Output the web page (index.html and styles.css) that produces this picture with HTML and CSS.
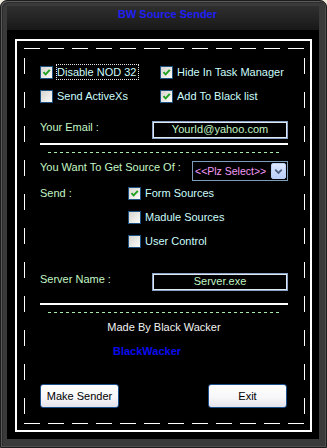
FILE: index.html
```html
<!DOCTYPE html>
<html lang="en">
<head>
	<meta charset="UTF-8">
	<meta name="viewport" content="width=device-width, initial-scale=1.0">
	<title>BW Source Sender</title>
	<link rel="stylesheet" href="styles.css">
</head>
<body>

	<div class="window">
		<div class="titlebar"><span class="titlebar__text">BW Source Sender</span></div>
		<div class="client">
			<div class="frame">
				<div class="panel">

					<div class="row row--checks">
						<label class="check check--wide">
							<span class="check__box is-checked"><svg viewBox="0 0 11 11"><path d="M2.5 5.2 L4.6 7.4 L8.8 2.8"/></svg></span>
							<span class="check__text check__text--focus">Disable NOD 32</span>
						</label>
						<label class="check">
							<span class="check__box is-checked"><svg viewBox="0 0 11 11"><path d="M2.5 5.2 L4.6 7.4 L8.8 2.8"/></svg></span>
							<span class="check__text">Hide In Task Manager</span>
						</label>
					</div>

					<div class="row row--checks row--second">
						<label class="check check--wide">
							<span class="check__box"></span>
							<span class="check__text">Send ActiveXs</span>
						</label>
						<label class="check">
							<span class="check__box is-checked"><svg viewBox="0 0 11 11"><path d="M2.5 5.2 L4.6 7.4 L8.8 2.8"/></svg></span>
							<span class="check__text">Add To Black list</span>
						</label>
					</div>

					<div class="row row--field row--email">
						<span class="label">Your Email :</span>
						<div class="textbox">YourId@yahoo.com</div>
					</div>

					<div class="rule"></div>
					<div class="dashes"></div>

					<div class="row row--field row--source">
						<span class="label">You Want To Get Source Of :</span>
						<div class="combo">
							<span class="combo__text">&lt;&lt;Plz Select&gt;&gt;</span>
							<span class="combo__btn"><svg viewBox="0 0 14 15"><path d="M3.5 6 L7 9.5 L10.5 6"/></svg></span>
						</div>
					</div>

					<div class="send">
						<span class="label label--send">Send :</span>
						<div class="send__list">
							<label class="check check--row">
								<span class="check__box is-checked"><svg viewBox="0 0 11 11"><path d="M2.5 5.2 L4.6 7.4 L8.8 2.8"/></svg></span>
								<span class="check__text">Form Sources</span>
							</label>
							<label class="check check--row">
								<span class="check__box"></span>
								<span class="check__text">Madule Sources</span>
							</label>
							<label class="check check--row">
								<span class="check__box"></span>
								<span class="check__text">User Control</span>
							</label>
						</div>
					</div>

					<div class="row row--field row--server">
						<span class="label">Server Name :</span>
						<div class="textbox">Server.exe</div>
					</div>

					<div class="rule rule--bottom"></div>
					<div class="dashes"></div>

					<div class="credit">Made By Black Wacker</div>
					<div class="brand">BlackWacker</div>

					<div class="buttons">
						<button class="btn">Make Sender</button>
						<button class="btn">Exit</button>
					</div>

				</div>
			</div>
		</div>
	</div>

</body>
</html>
```

FILE: styles.css
```css
* {
    margin: 0;
    padding: 0;
    box-sizing: border-box;
}

html,
body {
    background: #efeadb;
}

body {
    font-family: 'Liberation Sans', Arial, sans-serif;
    font-size: 11px;
}

/* window chrome */
.window {
    display: flex;
    flex-direction: column;
    width: 327px;
    height: 448px;
    padding: 5px 7px 8px 6px;
    background: #3a3a3a;
    border: 1px solid #1c1c1c;
    border-radius: 7px 7px 0 0;
    box-shadow: inset 1px 1px 0 #595959, inset -1px -1px 0 #4e4e4e, inset 2px 2px 0 #2c2c2c;
}

.titlebar {
    height: 24px;
    padding-left: 9px;
    text-align: center;
    background: linear-gradient(#2f2f2f, #242424 50%, #181818);
}

.titlebar__text {
    display: inline-block;
    line-height: 16px;
    font-weight: bold;
    font-size: 11px;
    color: #1f1ff5;
}

.client {
    flex: 1;
    padding: 9px 7px 7px 8px;
    background: #000;
}

.frame {
    height: 100%;
    padding: 7px 5px 6px 7px;
    border: 2px solid #fff;
}

/* long white dashes drawn with gradients */
.panel {
    height: 100%;
    padding: 1px 17px 1px 16px;
    background:
        repeating-linear-gradient(90deg, #fff 0 16px, transparent 16px 24px) left top / 100% 1px no-repeat,
        repeating-linear-gradient(90deg, #fff 0 16px, transparent 16px 24px) left bottom / 100% 1px no-repeat,
        repeating-linear-gradient(180deg, transparent 0 10px, #fff 10px 26px, transparent 26px 34px) left top / 1px 100% no-repeat,
        repeating-linear-gradient(180deg, transparent 0 10px, #fff 10px 26px, transparent 26px 34px) right top / 1px 100% no-repeat;
}

.row {
    display: flex;
}

.row--checks {
    margin-top: 15px;
    height: 16px;
}

.row--second {
    margin-top: 8px;
}

.row--field {
    justify-content: space-between;
    align-items: flex-start;
}

.row--email {
    margin-top: 17px;
}

.row--source {
    margin-top: 8px;
}

.row--server {
    margin-top: 20px;
}

.label {
    line-height: 12px;
    color: #c4f6c4;
}

/* checkboxes */
.check {
    display: flex;
    align-items: center;
}

.check--wide {
    width: 120px;
}

.check--row {
    height: 24px;
}

.check__box {
    display: flex;
    width: 13px;
    height: 13px;
    border: 1px solid #1c5180;
    background: linear-gradient(135deg, #d6d5cf, #fbfbf9);
}

.check__box svg {
    width: 11px;
    height: 11px;
    fill: none;
    stroke: #21a121;
    stroke-width: 1.9;
}

.check__text {
    margin-left: 3px;
    padding-right: 2px;
    line-height: 14px;
    border: 1px dotted transparent;
    color: #cdfdfd;
}

.check__text--focus {
    border-color: #e8e8e8;
}

/* inputs */
.textbox {
    width: 136px;
    height: 18px;
    line-height: 14px;
    text-align: center;
    color: #c4f6c4;
    background: #000;
    border: 1px solid #8aa3c6;
    box-shadow: inset 0 0 0 1px #dfe8f3;
}

.combo {
    display: flex;
    width: 96px;
    height: 20px;
    padding: 1px;
    border: 1px solid #7f9db9;
    background: #000;
}

.combo__text {
    flex: 1;
    overflow: hidden;
    white-space: nowrap;
    padding-left: 1px;
    line-height: 17px;
    font-size: 10.5px;
    color: #f49af6;
}

.combo__btn {
    display: flex;
    flex: none;
    width: 15px;
    height: 16px;
    border: 1px solid #bcd0f6;
    border-radius: 2px;
    background: linear-gradient(#dfe8fe, #b9cdf8);
}

.combo__btn svg {
    width: 13px;
    height: 14px;
    fill: none;
    stroke: #4d6185;
    stroke-width: 2;
}

/* separators */
.rule {
    margin-top: 4px;
    height: 2px;
    background: #fff;
}

.rule--bottom {
    margin-top: 12px;
}

.dashes {
    margin: 7px 9px 0 8px;
    height: 1px;
    background: repeating-linear-gradient(90deg, #a9eca9 0 3px, transparent 3px 6px);
}

/* send block */
.send {
    display: flex;
}

.label--send {
    width: 88px;
    line-height: 24px;
}

.credit {
    margin-top: 7px;
    line-height: 14px;
    text-align: center;
    color: #f2f2f2;
}

.brand {
    margin-top: 10px;
    padding-left: 73px;
    line-height: 14px;
    font-weight: bold;
    color: #0b0bf0;
}

.buttons {
    display: flex;
    justify-content: space-between;
    margin-top: 26px;
    padding-right: 1px;
}

.btn {
    width: 79px;
    height: 24px;
    font-family: 'Liberation Sans', Arial, sans-serif;
    font-size: 11px;
    color: #000;
    border: 1px solid #1d4f8c;
    border-radius: 3px;
    background: linear-gradient(#ffffff, #f6f5f8 60%, #e4e2ea);
}
```
